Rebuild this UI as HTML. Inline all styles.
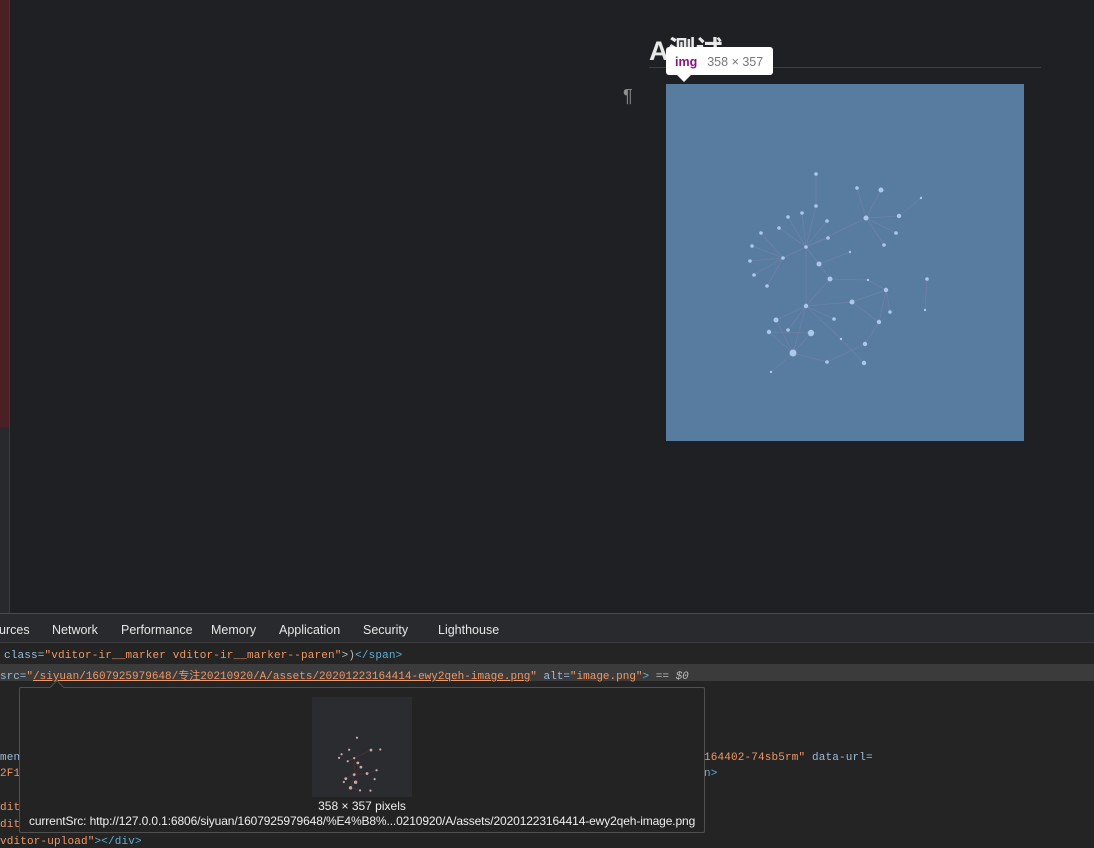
<!DOCTYPE html>
<html><head><meta charset="utf-8"><style>
*{margin:0;padding:0;box-sizing:border-box}
body{width:1094px;height:848px;overflow:hidden;background:#1f2023;position:relative;font-family:"Liberation Sans","Noto Sans CJK SC",sans-serif}
.abs{position:absolute}
.mono{font-family:"Liberation Mono","Noto Sans CJK SC",monospace;font-size:11px;letter-spacing:0.15px;white-space:pre;color:#9cbfe8}
.o{color:#f29766}.b{color:#5db0d7}.a{color:#9bbbdc}.g{color:#bbb}
</style></head><body>
<div class="abs" style="left:0;top:0;width:9px;height:427px;background:#4b2024"></div>
<div class="abs" style="left:0;top:427px;width:9px;height:186px;background:#27292d"></div>
<div class="abs" style="left:9px;top:0;width:1px;height:613px;background:#3a3b3e"></div>
<div class="abs" style="left:649px;top:29px;font-size:27px;font-weight:bold;color:#e8e8e8">A测试</div>
<div class="abs" style="left:649px;top:67px;width:392px;height:1px;background:#3d3e42"></div>
<div class="abs" style="left:623px;top:86px;font-size:18px;color:#8e8e8e">¶</div>
<svg class="abs" style="left:666px;top:84px" width="358" height="357">
<rect width="358" height="357" fill="#587ca0"/>
<g transform="translate(-666,-84)" stroke="#8a86aa" stroke-width="0.8" opacity="0.45" fill="none">
<path d="M866 218L857 188M866 218L881 190M866 218L899 216M866 218L896 233M866 218L884 245M866 218L806 247M806 247L816 206M806 247L802 213M806 247L788 217M806 247L827 221M806 247L828 238M806 247L779 228M806 247L783 258M806 247L819 264M806 247L806 306M816 174L816 206M783 258L761 233M783 258L752 246M783 258L750 261M783 258L754 275M783 258L767 286M850 252L819 264M819 264L830 279M830 279L806 306M830 279L868 280M806 306L852 302M806 306L776 320M806 306L788 330M806 306L793 353M806 306L841 339M806 306L834 319M868 280L886 290M852 302L886 290M852 302L879 322M886 290L879 322M886 290L890 312M879 322L865 344M865 344L827 362M841 339L864 363M793 353L776 320M793 353L769 332M793 353L811 333M793 353L827 362M793 353L771 372M811 333L769 332M921 198L899 216M927 279L925 310"/>
</g>
<g transform="translate(-666,-84)" fill="#a9c8ea">
<circle cx="816" cy="174" r="1.8"/><circle cx="857" cy="188" r="1.8"/><circle cx="881" cy="190" r="2.5"/><circle cx="921" cy="198" r="1.2"/><circle cx="866" cy="218" r="2.5"/><circle cx="899" cy="216" r="2.2"/><circle cx="896" cy="233" r="1.8"/><circle cx="884" cy="245" r="1.8"/><circle cx="816" cy="206" r="1.8"/><circle cx="802" cy="213" r="1.8"/><circle cx="788" cy="217" r="1.8"/><circle cx="827" cy="221" r="1.8"/><circle cx="828" cy="238" r="1.8"/><circle cx="779" cy="228" r="1.8"/><circle cx="761" cy="233" r="1.8"/><circle cx="806" cy="247" r="1.8"/><circle cx="752" cy="246" r="1.8"/><circle cx="783" cy="258" r="1.8"/><circle cx="750" cy="261" r="1.8"/><circle cx="850" cy="252" r="1.2"/><circle cx="819" cy="264" r="2.5"/><circle cx="754" cy="275" r="1.8"/><circle cx="767" cy="286" r="1.8"/><circle cx="830" cy="279" r="2.5"/><circle cx="868" cy="280" r="1.2"/><circle cx="927" cy="279" r="1.8"/><circle cx="886" cy="290" r="2.2"/><circle cx="852" cy="302" r="2.5"/><circle cx="806" cy="306" r="2.2"/><circle cx="890" cy="312" r="1.8"/><circle cx="879" cy="322" r="2.2"/><circle cx="834" cy="319" r="1.8"/><circle cx="776" cy="320" r="2.5"/><circle cx="788" cy="330" r="1.8"/><circle cx="811" cy="333" r="3.2"/><circle cx="769" cy="332" r="2.2"/><circle cx="925" cy="310" r="1.2"/><circle cx="841" cy="339" r="1.2"/><circle cx="865" cy="344" r="2.2"/><circle cx="793" cy="353" r="3.5"/><circle cx="827" cy="362" r="1.8"/><circle cx="864" cy="363" r="2.2"/><circle cx="771" cy="372" r="1.2"/>
</g></svg>
<div class="abs" style="left:666px;top:47px;width:107px;height:28px;background:#fff;border-radius:3px;font-size:12.5px;line-height:30px;padding-left:9px"><b style="color:#881280">img</b><span style="color:#777;margin-left:10px">358 × 357</span></div>
<div class="abs" style="left:677px;top:75px;width:0;height:0;border-left:7px solid transparent;border-right:7px solid transparent;border-top:7px solid #fff"></div>

<div class="abs" style="left:0;top:613px;width:1094px;height:235px;background:#242424;border-top:1px solid #4a4a4a"></div>
<div class="abs" style="left:0;top:614px;width:1094px;height:29px;background:#292a2d;border-bottom:1px solid #3c3c3c;font-size:12.5px;color:#e6e6e6;line-height:32px">
<span class="abs" style="left:-1px">urces</span><span class="abs" style="left:52px">Network</span><span class="abs" style="left:121px">Performance</span><span class="abs" style="left:211px">Memory</span><span class="abs" style="left:279px">Application</span><span class="abs" style="left:363px">Security</span><span class="abs" style="left:438px">Lighthouse</span></div>
<div class="abs mono" style="left:4px;top:650px"><span class="a">class=</span><span class="o">"vditor-ir__marker vditor-ir__marker--paren"</span><span class="g">&gt;)</span><span class="b">&lt;/span&gt;</span></div>
<div class="abs" style="left:0;top:664px;width:1094px;height:17px;background:#3b3b3b"></div>
<div class="abs mono" style="left:0;top:667px;letter-spacing:0px"><span class="a">src=</span><span class="o">"<u>/siyuan/1607925979648/专注20210920/A/assets/20201223164414-ewy2qeh-image.png</u>"</span> <span class="a">alt=</span><span class="o">"image.png"</span><span class="b">&gt;</span><span class="g"> == <i>$0</i></span></div>
<div class="abs mono" style="left:0;top:752px"><span class="a">men</span></div>
<div class="abs mono" style="left:0;top:768px"><span class="o">2F12</span></div>
<div class="abs mono" style="left:0;top:802px"><span class="o">dit</span></div>
<div class="abs mono" style="left:0;top:819px"><span class="o">dit</span></div>
<div class="abs mono" style="left:0;top:836px"><span class="o">vditor-upload"</span><span class="b">&gt;&lt;/div&gt;</span></div>
<div class="abs mono" style="left:704px;top:752px"><span class="o">164402-74sb5rm"</span> <span class="a">data-url=</span></div>
<div class="abs mono" style="left:704px;top:768px"><span class="b">n&gt;</span></div>
<div class="abs" style="left:19px;top:687px;width:686px;height:146px;background:#232323;border:1px solid #505050;border-radius:2px"></div>
<div class="abs" style="left:52px;top:682px;width:10px;height:10px;background:#232323;border-left:1px solid #505050;border-top:1px solid #505050;transform:rotate(45deg)"></div>
<div class="abs" style="left:312px;top:697px;width:100px;height:100px;background:#2b2c30"></div>
<svg class="abs" style="left:312px;top:697px" width="100" height="100">
<g stroke="#6a3438" stroke-width="1.5" fill="none" transform="translate(-183.5,-8) scale(0.28)"><path d="M866 218L806 247L806 306L793 353L827 362M806 247L783 258M830 279L806 306L852 302L886 290M806 306L776 320M793 353L811 333"/></g>
<g fill="#c9a7a7" transform="translate(-183.5,-8) scale(0.28)"><circle cx="816" cy="174" r="4"/><circle cx="866" cy="218" r="5"/><circle cx="806" cy="247" r="4"/><circle cx="783" cy="258" r="4"/><circle cx="819" cy="264" r="5"/><circle cx="830" cy="279" r="5"/><circle cx="806" cy="306" r="5"/><circle cx="852" cy="302" r="5"/><circle cx="886" cy="290" r="4"/><circle cx="879" cy="322" r="4"/><circle cx="776" cy="320" r="5"/><circle cx="811" cy="333" r="6"/><circle cx="793" cy="353" r="6"/><circle cx="827" cy="362" r="4"/><circle cx="864" cy="363" r="4"/><circle cx="752" cy="246" r="4"/><circle cx="761" cy="233" r="4"/><circle cx="788" cy="217" r="4"/><circle cx="899" cy="216" r="4"/><circle cx="769" cy="332" r="4"/></g></svg>
<div class="abs" style="left:0;top:799px;width:724px;text-align:center;font-size:12px;color:#eee">358 × 357 pixels</div>
<div class="abs" style="left:29px;top:814px;font-size:12px;letter-spacing:-0.12px;color:#eee;white-space:nowrap">currentSrc: http://127.0.0.1:6806/siyuan/1607925979648/%E4%B8%...0210920/A/assets/20201223164414-ewy2qeh-image.png</div>
</body></html>
